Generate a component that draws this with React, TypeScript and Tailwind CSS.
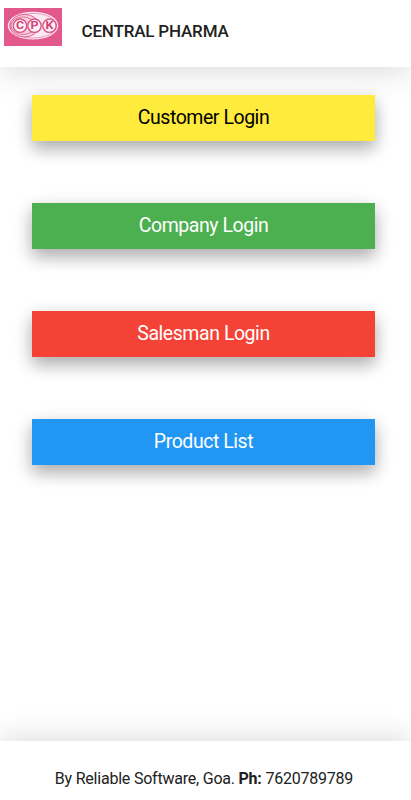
const buttons = [
  { label: 'Customer Login', color: 'bg-[#ffeb3b] text-black' },
  { label: 'Company Login', color: 'bg-[#4caf50] text-white' },
  { label: 'Salesman Login', color: 'bg-[#f44336] text-white' },
  { label: 'Product List', color: 'bg-[#2196f3] text-white' },
];

const letters = [
  { x: 16, text: 'C' },
  { x: 30.5, text: 'P' },
  { x: 45.5, text: 'K' },
];

function Logo() {
  return (
    <svg viewBox="0 0 58 38" className="w-[58px] h-[38px]">
      <rect width="58" height="38" fill="#e2588b" />
      <ellipse cx="29" cy="17.7" rx="25.3" ry="13.9" fill="#fbeaf1" />
      <ellipse cx="29" cy="17.7" rx="23.7" ry="12.3" fill="none" stroke="#e786aa" strokeWidth="0.8" />
      <ellipse cx="20.5" cy="17.7" rx="14.5" ry="11.3" fill="#f6cfdd" stroke="#e2588b" strokeWidth="0.9" />
      <ellipse cx="19" cy="17.7" rx="12" ry="8.8" fill="none" stroke="#e2588b" strokeWidth="0.8" />
      {letters.map(({ x, text }) => (
        <g key={text}>
          <circle cx={x} cy="17.7" r="6.7" fill="#fdf0f5" stroke="#dc5587" strokeWidth="1.4" />
          <text x={x - 4} y="21.3" textLength="8" lengthAdjust="spacingAndGlyphs" fontSize="10" fontWeight="700" fill="#d0447a">{text}</text>
        </g>
      ))}
    </svg>
  );
}

export default function App() {
  return (
    <div className="flex flex-col h-[800px] bg-white font-['Roboto',sans-serif] overflow-hidden">
      <header className="flex h-[67px] shrink-0 pt-2 pl-[3.5px] shadow-[0_4px_32px_rgba(0,0,0,0.15)]">
        <Logo />
        <h1 className="ml-5 mt-[11px] text-[17px] leading-6 tracking-[-0.18px] font-medium text-[#212121]">CENTRAL PHARMA</h1>
      </header>
      <main className="flex flex-col flex-1 gap-[62px] pt-[27.5px] pl-8 pr-9">
        {buttons.map(({ label, color }) => (
          <button key={label}
            className={`h-[46px] shrink-0 text-[19.5px] tracking-[-0.45px] shadow-[0_8px_16px_rgba(0,0,0,0.2),0_6px_20px_rgba(0,0,0,0.17)] ${color}`}
          >
            {label}
          </button>
        ))}
      </main>
      <footer className="h-[59px] shrink-0 pt-[26px] pr-[3px] text-center text-base tracking-[-0.22px] text-[#212121] shadow-[0_0_32px_rgba(0,0,0,0.17)]">
        By Reliable Software, Goa. <b>Ph:</b> 7620789789
      </footer>
    </div>
  );
}
